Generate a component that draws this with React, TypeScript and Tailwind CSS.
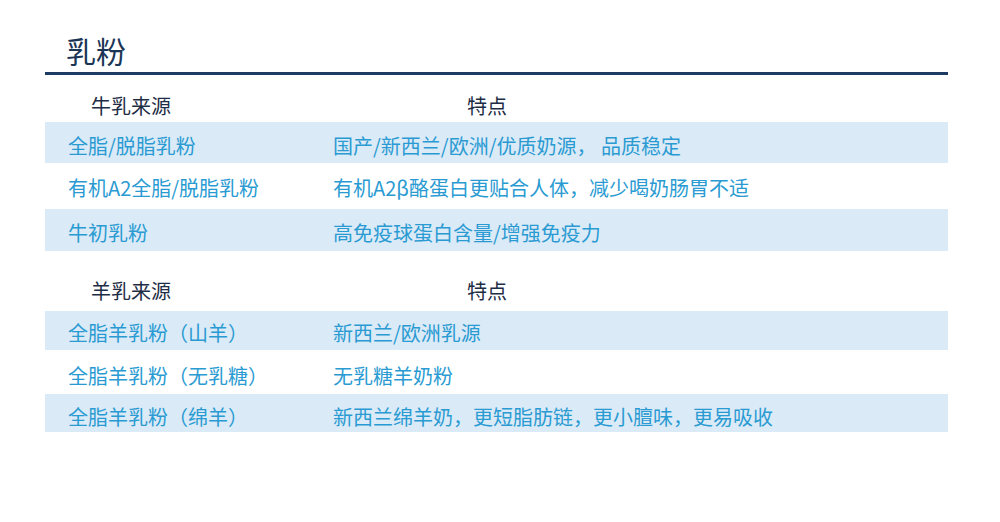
import React from "react";

type Row = { a: string; b: string; h: number; pt: number; bg: boolean };

const cow: Row[] = [
  { a: "全脂/脱脂乳粉", b: "国产/新西兰/欧洲/优质奶源， 品质稳定", h: 41, pt: 12, bg: true },
  { a: "有机A2全脂/脱脂乳粉", b: "有机A2β酪蛋白更贴合人体，减少喝奶肠胃不适", h: 46, pt: 13, bg: false },
  { a: "牛初乳粉", b: "高免疫球蛋白含量/增强免疫力", h: 42, pt: 12, bg: true },
];

const goat: Row[] = [
  { a: "全脂羊乳粉（山羊）", b: "新西兰/欧洲乳源", h: 39, pt: 10, bg: true },
  { a: "全脂羊乳粉（无乳糖）", b: "无乳糖羊奶粉", h: 44, pt: 14, bg: false },
  { a: "全脂羊乳粉（绵羊）", b: "新西兰绵羊奶，更短脂肪链，更小膻味，更易吸收", h: 38, pt: 11, bg: true },
];

function Rows({ rows }: { rows: Row[] }) {
  return (
    <div className="flex flex-col">
      {rows.map((r, i) => (
        <div
          key={i}
          className={`flex text-[20px] leading-[24px] text-[#2a9bd2] ${r.bg ? "bg-[#dbeaf7]" : "bg-white"}`}
          style={{ height: r.h, paddingTop: r.pt }}
        >
          <div className="w-[288px] shrink-0 pl-[23px] whitespace-nowrap">{r.a}</div>
          <div className="whitespace-nowrap">{r.b}</div>
        </div>
      ))}
    </div>
  );
}

function Header({ left, h, pt }: { left: string; h: number; pt: number }) {
  return (
    <div
      className="flex text-[20px] leading-[24px] text-[#1d2d45]"
      style={{ height: h, paddingTop: pt }}
    >
      <div className="w-[422px] shrink-0 pl-[46px] whitespace-nowrap">{left}</div>
      <div className="whitespace-nowrap">特点</div>
    </div>
  );
}

export default function App() {
  return (
    <div
      className="w-[1000px] h-[522px] bg-white overflow-hidden"
      style={{ fontFamily: '"Noto Sans CJK SC", "Noto Sans", sans-serif' }}
    >
      <div className="ml-[45px] w-[903px] flex flex-col">
        <div className="h-[72px] pt-[32px] pl-[21px] text-[30px] leading-[36px] text-[#1b3556]">乳粉</div>
        <div className="h-[3px] bg-[#1e3b63]" />
        <Header left="牛乳来源" h={47} pt={19} />
        <Rows rows={cow} />
        <Header left="羊乳来源" h={60} pt={28} />
        <Rows rows={goat} />
      </div>
    </div>
  );
}
